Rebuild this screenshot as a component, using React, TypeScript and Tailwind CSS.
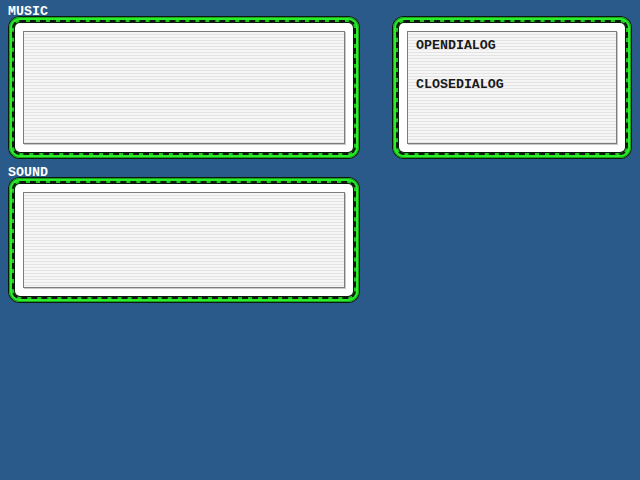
const font = { fontFamily: '"Liberation Mono", "DejaVu Sans Mono", monospace' };

function Frame({ className, children }: { className: string; children?: React.ReactNode }) {
  return (
    <div className={`rounded-[12px] bg-[#0c1a0c] p-px ${className}`}>
      <div className="h-full rounded-[11px] bg-[#2af02a] p-[3px] shadow-[inset_0_0_0_1px_#1aa81a]">
        <div className="h-full rounded-[8px] border-2 border-dashed border-[#0c1a0c] bg-[#22c822]">
          <div className="h-full rounded-[6px] bg-[#0c1a0c] p-px">
            <div className="h-full rounded-[5px] bg-white p-[8px]">
              <div className="h-full border border-[#7c7c7c] bg-[repeating-linear-gradient(to_bottom,#f6f6f6_0px,#f6f6f6_2px,#e3e3e3_2px,#e3e3e3_3px)] shadow-[1px_1px_0_#c8c8c8]">
                {children}
              </div>
            </div>
          </div>
        </div>
      </div>
    </div>
  );
}

function Label({ text, className }: { text: string; className: string }) {
  return (
    <div className={`h-[9px] text-[13.3px] font-bold leading-[9px] text-white ${className}`} style={font}>
      {text}
    </div>
  );
}

export default function App() {
  return (
    <div className="flex h-[480px] w-[640px] items-start gap-[32px] bg-[#2a5a8a] px-[8px]">
      <div className="flex w-[352px] flex-col">
        <Label text="MUSIC" className="mt-[7px]" />
        <Frame className="h-[143px]" />
        <Label text="SOUND" className="mt-[9px]" />
        <Frame className="h-[126px]" />
      </div>
      <Frame className="mt-[16px] h-[143px] w-[240px]">
        <div className="flex flex-col gap-[30px] px-[8px] pt-[9px] text-[13.3px] font-bold leading-[9px] text-[#1a1a1a]" style={font}>
          <div>OPENDIALOG</div>
          <div>CLOSEDIALOG</div>
        </div>
      </Frame>
    </div>
  );
}
